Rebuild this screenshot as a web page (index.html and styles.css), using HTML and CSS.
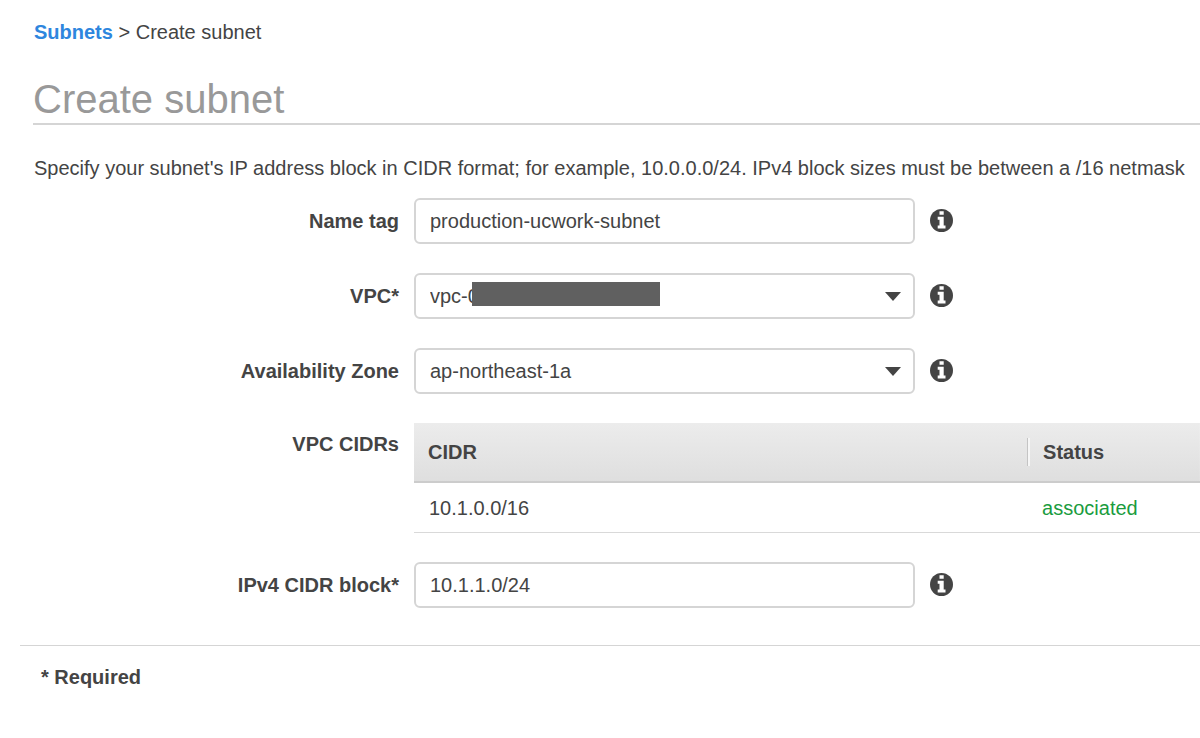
FILE: index.html
```
<!DOCTYPE html>
<html lang="en">
<head>
  <meta charset="UTF-8">
  <meta name="viewport" content="width=device-width, initial-scale=1.0">
  <title>Create subnet</title>
  <link rel="stylesheet" href="styles.css">
</head>
<body>
  <svg class="sprite" aria-hidden="true">
    <symbol id="info" viewBox="0 0 24 24">
      <circle cx="11.500" cy="11.500" r="11.500" fill="#444"/>
      <path fill="#fff" d="M9.500 2.200h4.200v3.600H9.500zM7.700 7.800h6v8.700h1.800v3H7.700v-3h1.800v-5.700H7.700z"/>
    </symbol>
    <symbol id="caret" viewBox="0 0 16 9">
      <path fill="#444" d="M0 0h16L8 9z"/>
    </symbol>
  </svg>

  <div class="header">
    <nav class="breadcrumb">
      <a href="#">Subnets</a> &gt; Create subnet
    </nav>
    <h1>Create subnet</h1>
    <p class="description">Specify your subnet's IP address block in CIDR format; for example, 10.0.0.0/24. IPv4 block sizes must be between a /16 netmask</p>
  </div>

  <form class="subnet-form">
    <div class="form-row">
      <label for="nameTag">Name tag</label>
      <div class="field">
        <input type="text" class="control" id="nameTag" value="production-ucwork-subnet">
      </div>
      <button type="button" class="info-btn" aria-label="Info"><svg><use href="#info"/></svg></button>
    </div>

    <div class="form-row">
      <label for="vpc">VPC*</label>
      <div class="field">
        <select class="control" id="vpc">
          <option>vpc-0</option>
        </select>
        <span class="mask"></span>
        <svg class="caret"><use href="#caret"/></svg>
      </div>
      <button type="button" class="info-btn" aria-label="Info"><svg><use href="#info"/></svg></button>
    </div>

    <div class="form-row">
      <label for="zone">Availability Zone</label>
      <div class="field">
        <select class="control" id="zone">
          <option>ap-northeast-1a</option>
        </select>
        <svg class="caret"><use href="#caret"/></svg>
      </div>
      <button type="button" class="info-btn" aria-label="Info"><svg><use href="#info"/></svg></button>
    </div>

    <div class="form-row form-row-table">
      <span class="row-title" id="cidrsTitle">VPC CIDRs</span>
      <table class="cidr-table" aria-labelledby="cidrsTitle">
        <thead>
          <tr>
            <th class="col-cidr"><span>CIDR</span></th>
            <th><span>Status</span></th>
          </tr>
        </thead>
        <tbody>
          <tr>
            <td>10.1.0.0/16</td>
            <td class="status-ok">associated</td>
          </tr>
        </tbody>
      </table>
    </div>

    <div class="form-row">
      <label for="cidrBlock">IPv4 CIDR block*</label>
      <div class="field">
        <input type="text" class="control" id="cidrBlock" value="10.1.1.0/24">
      </div>
      <button type="button" class="info-btn" aria-label="Info"><svg><use href="#info"/></svg></button>
    </div>
  </form>

  <div class="footer">* Required</div>
</body>
</html>
```
FILE: styles.css
```
* {
  box-sizing: border-box;
}

body {
  margin: 0;
  padding: 20px 0;
  font-family: "Liberation Sans", Arial, sans-serif;
  font-size: 20px;
  line-height: 24px;
  color: #444;
  background: #fff;
  overflow-x: hidden;
}

.sprite {
  display: none;
}

.header {
  padding-left: 33px;
}

.breadcrumb,
.description {
  padding-left: 1px;
}

.breadcrumb a {
  color: #2e86de;
  font-weight: bold;
  text-decoration: none;
}

.breadcrumb a:hover {
  text-decoration: underline;
}

h1 {
  margin: 31px 0 0;
  border-bottom: 2px solid #d5d5d5;
  font-size: 40px;
  line-height: 48px;
  font-weight: normal;
  color: #999;
}

.description {
  margin: 31px 0 18px;
  white-space: nowrap;
}

.subnet-form {
  display: flex;
  flex-direction: column;
  gap: 29px;
  padding-left: 33px;
}

.form-row {
  display: grid;
  grid-template-columns: 366px minmax(0, 501px) 24px;
  column-gap: 15px;
  align-items: center;
}

.form-row-table {
  grid-template-columns: 366px 1fr;
  align-items: start;
}

label,
.row-title {
  text-align: right;
  font-weight: bold;
}

.row-title {
  padding-top: 9px;
}

.field {
  position: relative;
}

.control {
  display: block;
  width: 100%;
  height: 46px;
  padding: 0 14px;
  border: 2px solid #d5d5d5;
  border-radius: 6px;
  background: #fff;
  color: #444;
  font: inherit;
  appearance: none;
}

.control:focus {
  outline: none;
  border-color: #2e86de;
}

.caret {
  position: absolute;
  top: 19px;
  right: 14px;
  width: 16px;
  height: 9px;
  pointer-events: none;
}

/* covers the rest of the VPC id */
.mask {
  position: absolute;
  top: 9px;
  left: 58px;
  width: 188px;
  height: 24px;
  background: #606060;
}

.info-btn {
  width: 24px;
  height: 24px;
  padding: 0;
  border: none;
  background: none;
  cursor: pointer;
}

.info-btn svg {
  display: block;
  width: 24px;
  height: 24px;
}

.cidr-table {
  width: 100%;
  border-collapse: separate;
  border-spacing: 0;
  table-layout: fixed;
  text-align: left;
}

.cidr-table thead {
  background: linear-gradient(#ececec, #dedede);
}

.cidr-table th {
  height: 60px;
  padding: 0;
  border-bottom: 2px solid #ccc;
}

.cidr-table th span {
  display: block;
  padding-left: 14px;
  line-height: 28px;
}

/* engraved divider between header cells */
.cidr-table th + th span {
  border-left: 1px solid #c4c4c4;
  box-shadow: inset 2px 0 #f6f6f6;
  padding-left: 15px;
}

.cidr-table td {
  height: 50px;
  padding: 0 15px;
  border-bottom: 1px solid #d9d9d9;
}

.col-cidr {
  width: 78%;
}

.cidr-table .status-ok {
  color: #1a9c3e;
}

.footer {
  margin: 37px 0 0 20px;
  padding: 19px 21px;
  border-top: 1px solid #d5d5d5;
  font-weight: bold;
}
```
